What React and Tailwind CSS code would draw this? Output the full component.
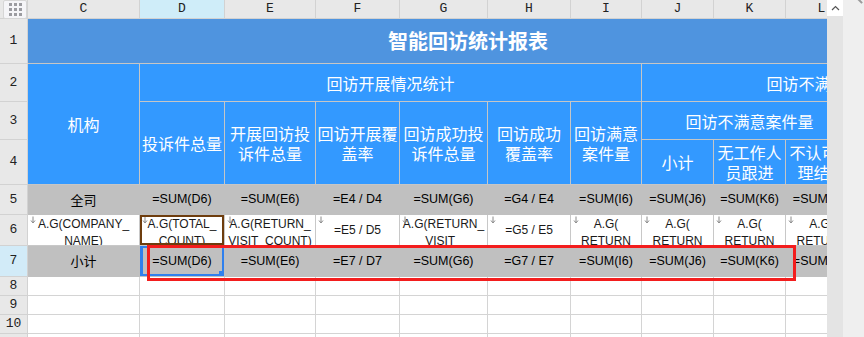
import React from "react";

const CN = "font-['Noto_Sans_CJK_SC','Noto_Sans',sans-serif]";
const LAT = "font-['Liberation_Sans','Noto_Sans_CJK_SC',sans-serif]";
const MONO = "font-['Liberation_Mono',monospace]";

const letters = ["C", "D", "E", "F", "G", "H", "I", "J", "K", "L", "M", "N"];

const row5 = ["全司", "=SUM(D6)", "=SUM(E6)", "=E4 / D4", "=SUM(G6)", "=G4 / E4", "=SUM(I6)", "=SUM(J6)", "=SUM(K6)", "=SUM(L6)", "", ""];
const row7 = ["小计", "=SUM(D6)", "=SUM(E6)", "=E7 / D7", "=SUM(G6)", "=G7 / E7", "=SUM(I6)", "=SUM(J6)", "=SUM(K6)", "=SUM(L6)", "", ""];
const row6 = [
  ["A.G(COMPANY_", "NAME)"],
  ["A.G(TOTAL_", "COUNT)"],
  ["A.G(RETURN_", "VISIT_COUNT)"],
  ["=E5 / D5"],
  ["A.G(RETURN_", "VISIT_"],
  ["=G5 / E5"],
  ["A.G(", "RETURN"],
  ["A.G(", "RETURN"],
  ["A.G(", "RETURN"],
  ["A.G(", "RETURN"],
  [],
  [],
];

const blue = "flex items-center justify-center text-center bg-[#3399ff] text-white border-r border-b border-[#c6c6c6] text-[16px] leading-[20px] " + CN;
const rowNum = "flex items-center justify-center bg-[#e8e8e8] border-r border-b border-[#d2d2d2] text-[13px] text-[#222] " + MONO;

const DownMark = () => (
  <svg className="absolute left-[2px] top-[1px]" width="6" height="8" viewBox="0 0 6 8">
    <path d="M3 0.5V6.5M1 4.5L3 7L5 4.5" stroke="#8a8a8a" strokeWidth="1" fill="none" />
  </svg>
);

const GridCorner = () => (
  <div className="flex items-start justify-end bg-[#e8e8e8] border-b border-r border-[#d2d2d2]">
    <div className="flex h-[19px] w-[24px] items-center justify-center rounded-[2px] border border-[#d6d6d6] bg-[#f5f5f8]">
      <div className="grid grid-cols-3 gap-[2px]">
        {Array.from({ length: 9 }).map((_, i) => (
          <div key={i} className="h-[3px] w-[3px] bg-[#9b9ba0]" />
        ))}
      </div>
    </div>
  </div>
);

const cellText = (t, i) => (i === 0 ? CN + " text-[13px]" : LAT + " text-[12.5px]");

export default function App() {
  return (
    <div className="flex h-[337px] w-[864px] overflow-hidden bg-white">
      <div className="relative w-[827px] shrink-0 overflow-hidden">
        <div className="grid w-[1036px] grid-cols-[28px_112px_85px_91px_84px_88px_83px_71px_72px_72px_72px_50px_128px] grid-rows-[19px_45px_38px_38px_45px_30px_31px_31px_19px_19px_19px_19px]">
          {/* column letters */}
          <GridCorner />
          {letters.map((l) => (
            <div
              key={l}
              className={`flex items-center justify-center border-r border-b border-[#d2d2d2] text-[13px] text-[#222] ${MONO} ${l === "D" ? "bg-[#cfedf9]" : "bg-[#e8e8e8]"}`}
            >
              {l}
            </div>
          ))}

          {/* row 1 */}
          <div className={rowNum}>1</div>
          <div className={`col-span-11 flex items-center justify-center bg-[#4f94df] text-[20px] font-bold text-white border-b border-[#c6c6c6] ${CN}`}>
            智能回访统计报表
          </div>
          <div className="bg-[#4f94df] border-b border-[#c6c6c6]" />

          {/* row 2 */}
          <div className={rowNum}>2</div>
          <div className={`${blue} row-span-3`}>机构</div>
          <div className={`${blue} col-span-6`}>回访开展情况统计</div>
          <div className={`${blue} col-span-5`}>回访不满意情况统计</div>

          {/* row 3 */}
          <div className={rowNum}>3</div>
          <div className={`${blue} row-span-2`}>投诉件总量</div>
          <div className={`${blue} row-span-2`}>开展回访投<br />诉件总量</div>
          <div className={`${blue} row-span-2`}>回访开展覆<br />盖率</div>
          <div className={`${blue} row-span-2`}>回访成功投<br />诉件总量</div>
          <div className={`${blue} row-span-2`}>回访成功<br />覆盖率</div>
          <div className={`${blue} row-span-2`}>回访满意<br />案件量</div>
          <div className={`${blue} col-span-3`}>回访不满意案件量</div>
          <div className={`${blue} col-span-2`}></div>

          {/* row 4 */}
          <div className={rowNum}>4</div>
          <div className={blue}>小计</div>
          <div className={blue}>无工作人<br />员跟进</div>
          <div className={blue}>不认可处<br />理结果</div>
          <div className={blue}></div>
          <div className={blue}></div>

          {/* row 5 */}
          <div className={rowNum}>5</div>
          {row5.map((t, i) => (
            <div key={i} className={`flex items-center justify-center whitespace-nowrap overflow-hidden bg-[#c0c0c0] border-r border-b border-[#c0c0c0] text-black ${cellText(t, i)}`}>
              {t}
            </div>
          ))}

          {/* row 6 */}
          <div className={rowNum}>6</div>
          {row6.map((lines, i) => (
            <div
              key={i}
              className={`relative flex justify-center overflow-hidden whitespace-nowrap bg-white border-r border-b border-[#c8c8c8] text-[12px] text-[#1a1a1a] ${LAT} ${lines.length > 1 ? "items-start pt-[1px] leading-[17px]" : "items-center"}`}
            >
              {i < 10 && <DownMark />}
              <div className="flex flex-col items-center">
                {lines.map((l, j) => (
                  <span key={j}>{l}</span>
                ))}
              </div>
              {i === 1 && <div className="absolute inset-0 border-2 border-[#6e3d0e]" />}
            </div>
          ))}

          {/* row 7 */}
          <div className={`${rowNum} !bg-[#d2ebf8]`}>7</div>
          {row7.map((t, i) => (
            <div key={i} className={`relative flex items-center justify-center whitespace-nowrap overflow-hidden bg-[#c0c0c0] border-r border-b border-[#c0c0c0] text-black ${cellText(t, i)}`}>
              {t}
              {i === 1 && (
                <div className="absolute inset-0 border-2 border-l-[3px] border-[#2f80ee]">
                  <div className="absolute -bottom-[2px] -right-[2px] h-[5px] w-[5px] bg-[#2f80ee]" />
                </div>
              )}
            </div>
          ))}

          {/* rows 8-11 */}
          {[8, 9, 10, 11].map((r) => (
            <React.Fragment key={r}>
              <div className={rowNum}>{r}</div>
              {letters.map((l) => (
                <div key={l} className="bg-white border-r border-b border-[#d4d4d4]" />
              ))}
            </React.Fragment>
          ))}
        </div>

        {/* red annotation box */}
        <div className="pointer-events-none absolute left-[147px] top-[245px] h-[36px] w-[649px] border-[3px] border-[#f31d1d]" />
      </div>

      {/* vertical scrollbar */}
      <div className="flex w-[16px] shrink-0 flex-col bg-[#e4e4e4]">
        <div className="flex h-[16px] items-center justify-center bg-white">
          <svg width="9" height="6" viewBox="0 0 9 6">
            <path d="M1 5L4.5 1.5L8 5" stroke="#555" strokeWidth="1.2" fill="none" />
          </svg>
        </div>
      </div>
      <div className="relative flex-1 bg-[#efefef]">
        <div className="absolute right-[1px] top-0 h-[2px] w-[6px] rotate-45 bg-[#9a9a9a]" />
      </div>
    </div>
  );
}
